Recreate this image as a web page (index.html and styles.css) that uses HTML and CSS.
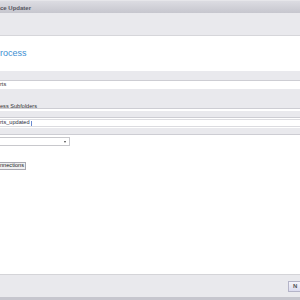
FILE: index.html
```html
<!DOCTYPE html>
<html>
<head>
<meta charset="utf-8">
<link rel="stylesheet" href="styles.css">
</head>
<body>
<div class="window">
  <div class="titlebar"><span class="title">ce Updater</span></div>
  <div class="header"></div>
  <div class="intro"><span class="intro-text">rocess</span></div>
  <div class="band band-a"></div>
  <div class="field-row"><span class="small">rts</span></div>
  <div class="band band-b"><span class="small">ess Subfolders</span></div>
  <div class="gap"></div>
  <div class="band band-c"></div>
  <div class="input-row"><div class="input"><span class="small input-text">rts_updated</span><span class="caret"></span></div></div>
  <div class="band band-c"></div>
  <div class="select-row">
    <div class="select"><span class="arrow"></span></div>
  </div>
  <div class="btn-row"><span class="btn small">nnections</span></div>
  <div class="spacer"></div>
  <div class="footer"><span class="next">N</span></div>
  <div class="bottom"></div>
</div>
</body>
</html>
```
FILE: styles.css
```css
html, body { margin: 0; padding: 0; background: #fff; }
body { font-family: "Liberation Sans", "DejaVu Sans", sans-serif; }
.window { width: 300px; height: 300px; display: flex; flex-direction: column; overflow: hidden; }
.titlebar { height: 13px; background: linear-gradient(#dcdce2, #c6c6ce); border-top: 1px solid #e6e6ea; box-sizing: border-box; display: flex; align-items: center; }
.title { font-size: 6px; font-weight: bold; color: #55555f; line-height: 1; margin-top: 1px; }
.header { height: 22px; background: #e9e9ed; border-bottom: 1px solid #d6d6da; }
.intro { height: 35px; background: #fff; box-sizing: border-box; padding-top: 12px; }
.intro-text { font-size: 9px; color: #3b8fd2; line-height: 10px; display: block; }
.band { background: #e9e9ed; border-bottom: 1px solid #cdcdd3; box-sizing: border-box; }
.band-a { height: 10px; }
.field-row { height: 8px; background: #fff; display: flex; align-items: center; }
.small { font-size: 5.6px; color: #333; line-height: 1; }
.band-b { height: 20px; padding-top: 5px; }
.gap { height: 2px; background: #fff; }
.band-c { height: 7px; }
.input-row { height: 10px; background: #fff; padding-top: 1px; box-sizing: border-box; }
.input { height: 8px; border-top: 1px solid #dcdce0; border-bottom: 1px solid #dcdce0; box-sizing: border-box; display: flex; align-items: center; }
.input-text { color: #2a2a40; }
.caret { width: 1px; height: 5px; background: #6a8ad0; margin-left: 1px; }
.select-row { height: 18px; padding-top: 2px; box-sizing: border-box; }
.select { width: 70px; height: 9px; border: 1px solid #c8c8cc; border-left: none; box-sizing: border-box; position: relative; }
.arrow { position: absolute; right: 3px; top: 3px; width: 0; height: 0; border-left: 1.5px solid transparent; border-right: 1.5px solid transparent; border-top: 2px solid #444; }
.btn-row { height: 10px; padding-top: 0; }
.btn { display: inline-flex; align-items: center; height: 8px; padding: 0 1px 0 0; border: 1px solid #a8a8b0; border-left: none; background: #f0f0f2; box-sizing: border-box; color: #222; }
.spacer { flex: 1; }
.footer { height: 23px; background: #e9e9ed; border-top: 1px solid #d4d4d8; box-sizing: border-box; display: flex; justify-content: flex-end; align-items: flex-start; padding-top: 6px; }
.next { width: 12px; height: 11px; box-sizing: border-box; border: 1px solid #b4b4c8; border-right: none; background: linear-gradient(#f4f4fa, #dcdcf0); font-size: 6px; font-weight: bold; color: #555; padding-left: 4px; line-height: 9px; }
.bottom { height: 3px; background: #c6c6ce; }
```
